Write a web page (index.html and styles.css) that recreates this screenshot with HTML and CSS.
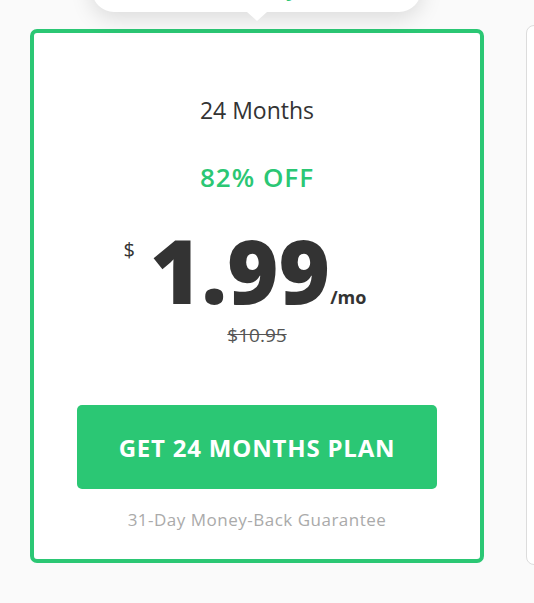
FILE: index.html
```html
<!DOCTYPE html>
<html>
<head>
<meta charset="utf-8">
<link rel="stylesheet" href="styles.css">
</head>
<body>
<div class="plans">
  <div class="card featured">
    <div class="badge"><span class="badge-text">Limited Time Only</span></div>
    <div class="badge-arrow"></div>
    <div class="term">24 Months</div>
    <div class="discount">82% OFF</div>
    <div class="price">
      <span class="currency">$</span>
      <span class="amount">1.99</span>
      <span class="per">/mo</span>
    </div>
    <div class="old-price">$10.95</div>
    <a class="cta" href="#">GET 24 MONTHS PLAN</a>
    <div class="guarantee">31-Day Money-Back Guarantee</div>
  </div>
  <div class="card other"></div>
</div>
</body>
</html>
```
FILE: styles.css
```css
html, body {
  margin: 0;
  padding: 0;
  background: #fafafa;
  font-family: "Open Sans", "Lato", sans-serif;
  overflow: hidden;
}
.plans {
  display: flex;
  align-items: flex-start;
  gap: 42px;
  padding: 29px 0 0 30px;
}
.card {
  box-sizing: border-box;
  background: #fff;
  flex-shrink: 0;
}
.featured {
  position: relative;
  width: 454px;
  height: 534px;
  border: 4px solid #2bc774;
  border-radius: 7px;
  display: flex;
  flex-direction: column;
  align-items: center;
}
.other {
  width: 300px;
  height: 540px;
  margin-top: -4px;
  border: 1px solid #dcdcdc;
  border-radius: 8px;
}
.badge {
  position: absolute;
  top: -83px;
  left: 58px;
  width: 329px;
  height: 62px;
  box-sizing: border-box;
  background: #fff;
  border-radius: 22px;
  box-shadow: 0 6px 22px rgba(0,0,0,0.13);
  display: flex;
  justify-content: flex-start;
  align-items: flex-end;
}
.badge-text {
  color: #2bc774;
  font-weight: 700;
  font-size: 22px;
  line-height: 22px;
  margin-bottom: 14.5px;
  margin-left: 6px;
  white-space: nowrap;
}
.badge-arrow {
  position: absolute;
  top: -21px;
  left: 213px;
  width: 0;
  height: 0;
  border-left: 10px solid transparent;
  border-right: 10px solid transparent;
  border-top: 9px solid #fff;
}
.term {
  margin-top: 62px;
  font-size: 23px;
  line-height: 30px;
  color: #333;
}
.discount {
  margin-top: 36px;
  font-size: 26px;
  line-height: 32px;
  font-weight: 600;
  letter-spacing: 1px;
  color: #2bc774;
}
.price {
  margin-top: 35px;
  margin-right: 24px;
  display: flex;
  align-items: baseline;
  color: #333;
  height: 84px;
}
.currency {
  align-self: flex-start;
  font-size: 20px;
  line-height: 26px;
  margin-top: 9px;
  margin-right: 15px;
}
.amount {
  font-size: 88px;
  line-height: 84px;
  font-weight: 800;
}
.per {
  font-size: 18px;
  font-weight: 700;
  margin-left: 0;
}
.old-price {
  margin-top: 11px;
  font-size: 19px;
  line-height: 24px;
  color: #555;
  text-decoration: line-through;
}
.cta {
  margin-top: 58px;
  width: 360px;
  height: 84px;
  border-radius: 5px;
  background: #2bc774;
  color: #fff;
  text-decoration: none;
  font-weight: 700;
  font-size: 24px;
  letter-spacing: 0.8px;
  display: flex;
  align-items: center;
  justify-content: center;
}
.guarantee {
  margin-top: 19px;
  font-size: 17px;
  line-height: 24px;
  letter-spacing: 0.5px;
  color: #aaa;
}
```
